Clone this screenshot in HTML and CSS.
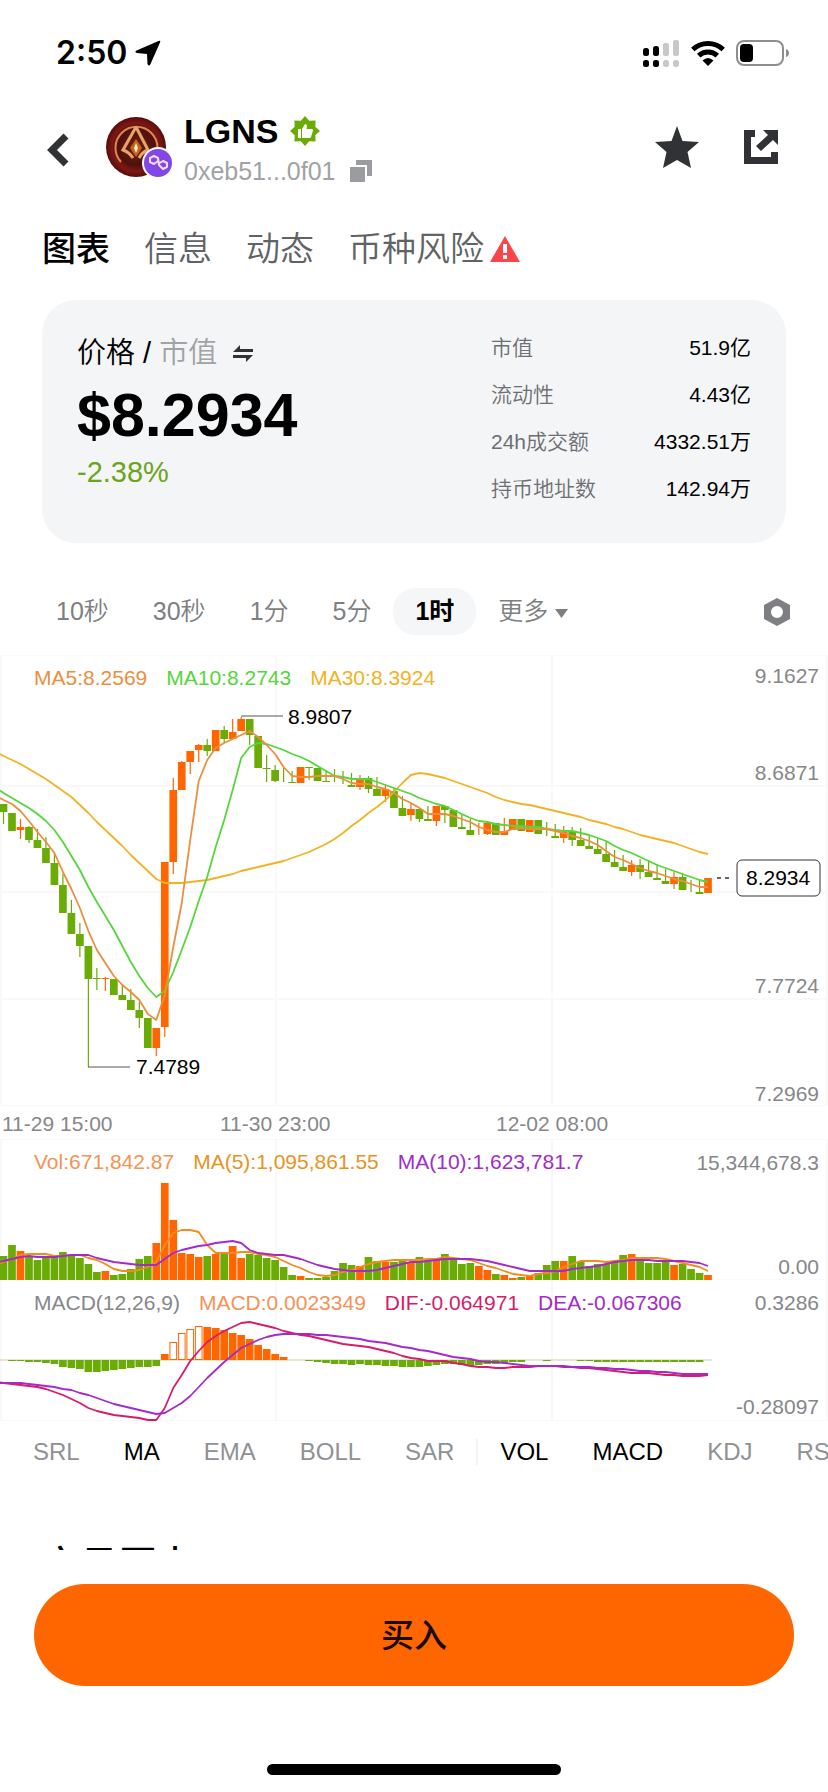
FILE: index.html
```html
<!DOCTYPE html>
<html lang="zh-CN">
<head>
    <meta charset="UTF-8">
    <title>LGNS</title>
    <meta name="viewport" content="width=device-width, initial-scale=1.0">
    <link rel="stylesheet" href="styles.css">
</head>
<body>
<div class="app">
    <main class="content">
        <div class="status-bar">
            <div class="clock">2:50
                <svg width="26" height="26" viewBox="0 0 26 26"><path d="M23.500 1 Q26 0 25 2.500 L15.500 24 Q14 27 12.500 24 L12 14 L2 13 Q-1 12 1.500 10.500 Z"/></svg>
            </div>
            <div class="status-icons">
                <svg width="37" height="28" viewBox="0 0 37 28">
                    <rect x="0" y="9" width="6" height="8" rx="2.500"/><rect x="10" y="7" width="6" height="10" rx="2.500"/>
                    <rect x="0" y="21" width="6" height="7" rx="2.500"/><rect x="10" y="21" width="6" height="7" rx="2.500"/>
                    <g fill="#c8c8c8"><rect x="20" y="4" width="6" height="13" rx="2"/><rect x="30" y="1" width="6" height="16" rx="2"/>
                    <rect x="20" y="21" width="6" height="7" rx="2.500"/><rect x="30" y="21" width="6" height="7" rx="2.500"/></g>
                </svg>
                <svg width="34" height="26" viewBox="0 0 34 26">
                    <g fill="none" stroke="#000" stroke-width="5"><path d="M1.800 9.500 A22 22 0 0 1 32.200 9.500"/><path d="M7.700 15.600 A13.500 13.500 0 0 1 26.300 15.600"/></g>
                    <path d="M11.500 20.500 Q17 15.500 22.500 20.500 L17 26 Z"/>
                </svg>
                <svg width="53" height="26" viewBox="0 0 53 26">
                    <rect x="1" y="1" width="46" height="24" rx="7" fill="none" stroke="#8e8e8e" stroke-width="2"/>
                    <rect x="4" y="4" width="13" height="18" rx="4"/><path d="M50 9 Q53 10 53 13 Q53 16 50 17 Z" fill="#8e8e8e"/>
                </svg>
            </div>
        </div>

        <header class="header">
            <button class="icon-btn" aria-label="返回">
                <svg width="22" height="34" viewBox="0 0 22 34"><path d="M19 3 L5 17 L19 31" fill="none" stroke="#303236" stroke-width="7"/></svg>
            </button>
            <svg class="avatar" width="68" height="66" viewBox="0 0 68 66">
                <defs>
                    <radialGradient id="coin"><stop offset="0" stop-color="#6b2210"/><stop offset="0.6" stop-color="#50100c"/><stop offset="0.8" stop-color="#7d1715"/><stop offset="1" stop-color="#5a0b0c"/></radialGradient>
                </defs>
                <circle cx="30" cy="30" r="30" fill="url(#coin)"/>
                <path d="M15 45 A21 21 0 1 1 46 45" fill="none" stroke="#d98a4e" stroke-width="2"/>
                <path d="M30 10 L42 33 Q36 35 33 41 M30 10 L17 33 Q23 35 27 41" fill="none" stroke="#e8a468" stroke-width="3"/>
                <path d="M30 22 L36 31 L30 40 L24 31 Z" fill="#c4661f"/>
                <path d="M30 26 L32 31 L30 36 L28 31 Z" fill="#fff0b8"/>
                <circle cx="52" cy="46" r="16" fill="#fff"/>
                <circle cx="52" cy="46" r="14" fill="#8247e5"/>
                <path d="M52 44 L48 47 L44 45 V41 L48 39 L52 41 L53 48 L57 52 L61 50 V46 L57 44 L52 47" fill="none" stroke="#f0dcff" stroke-width="2" stroke-linejoin="round"/>
            </svg>
            <div class="token">
                <h1 class="token-name">LGNS
                    <svg width="30" height="30" viewBox="0 0 30 30">
                        <path d="M15 0 L19.200 4.700 L25.600 4.400 L25.300 10.800 L30 15 L25.300 19.200 L25.600 25.600 L19.200 25.300 L15 30 L10.800 25.300 L4.400 25.600 L4.700 19.200 L0 15 L4.700 10.800 L4.400 4.400 L10.800 4.700 Z" fill="#6bab06"/>
                        <path d="M8 13 H11 V22 H8 Z M12 13 L15 8 Q17 8 17 10 L16.500 13 H22 Q23 13 23 14.500 L21 21 Q20.500 22 19.500 22 H12 Z" fill="#fff"/>
                    </svg>
                </h1>
                <div class="token-address">0xeb51...0f01
                    <button class="icon-btn" aria-label="复制">
                        <svg width="24" height="24" viewBox="0 0 24 24" fill="#9a9ca0"><path d="M7 1 H23 V17 H18 V6 H7 Z"/><path d="M1 8 H16 V23 H1 Z"/></svg>
                    </button>
                </div>
            </div>
            <div class="actions">
                <button class="icon-btn" aria-label="收藏">
                    <svg width="44" height="42" viewBox="0 0 44 42"><path d="M22 0 L27.500 15 L44 16 L32.500 26 L36 42 L22 34 L8 42 L11.500 26 L0 16 L16.500 15 Z" fill="#303236"/></svg>
                </button>
                <button class="icon-btn" aria-label="分享">
                    <svg width="34" height="34" viewBox="0 0 34 34" fill="#303236"><path d="M0 0 H11 V7 H7 V27 H27 V22 H34 V34 H0 Z"/><path d="M19 0 H34 V15 L29 10 L17 21 L12 16 L24 5 Z"/></svg>
                </button>
            </div>
        </header>

        <nav class="tabs">
            <a href="#chart" class="active">图表</a>
            <a href="#info">信息</a>
            <a href="#news">动态</a>
            <a href="#risk">币种风险
                <svg width="30" height="26" viewBox="0 0 30 26"><path d="M15 0 L30 26 H0 Z" fill="#fb4548"/><path d="M13 8 H17 V17 H13 Z M13 19 H17 V23 H13 Z" fill="#fff"/></svg>
            </a>
        </nav>

        <section class="card">
            <div class="price-box">
                <div class="price-switch"><span>价格 / <span class="muted">市值</span></span>
                    <button class="icon-btn" aria-label="切换">
                        <svg width="20" height="17" viewBox="0 0 20 17" fill="#303236"><path d="M20 4 V7 H0 L7 0 V4 Z"/><path d="M0 10 V13 H13 V17 L20 10 Z"/></svg>
                    </button>
                </div>
                <div class="price">$8.2934</div>
                <div class="change">-2.38%</div>
            </div>
            <dl class="stats">
                <div><dt>市值</dt><dd>51.9亿</dd></div>
                <div><dt>流动性</dt><dd>4.43亿</dd></div>
                <div><dt>24h成交额</dt><dd>4332.51万</dd></div>
                <div><dt>持币地址数</dt><dd>142.94万</dd></div>
            </dl>
        </section>

        <div class="periods">
            <button>10秒</button>
            <button>30秒</button>
            <button>1分</button>
            <button>5分</button>
            <button class="active">1时</button>
            <button>更多 <svg width="13" height="9" viewBox="0 0 13 9"><path d="M0 0 H13 L6.500 9 Z" fill="#7d7f82"/></svg></button>
            <button class="icon-btn settings" aria-label="设置">
                <svg width="26" height="28" viewBox="0 0 26 28"><path fill-rule="evenodd" d="M13 0 L26 7 V21 L13 28 L0 21 V7 Z M13 8 A6 6 0 1 0 13 20 A6 6 0 1 0 13 8 Z" fill="#7d7f82"/></svg>
            </button>
        </div>

        <section class="chart" id="chart">
            <div class="panel">
                <div class="legend"><span class="ma5">MA5:8.2569</span><span class="ma10">MA10:8.2743</span><span class="ma30">MA30:8.3924</span></div>
                <svg id="price-chart" viewBox="0 0 828 451"></svg>
            </div>
            <svg id="time-axis" viewBox="0 0 828 33"></svg>
            <div class="panel">
                <div class="legend"><span class="vol">Vol:671,842.87</span><span class="vol-ma5">MA(5):1,095,861.55</span><span class="purple">MA(10):1,623,781.7</span></div>
                <svg id="volume-chart" viewBox="0 0 828 141"></svg>
            </div>
            <div class="panel">
                <div class="legend"><span>MACD(12,26,9)</span><span class="vol">MACD:0.0023349</span><span class="dif">DIF:-0.064971</span><span class="purple">DEA:-0.067306</span></div>
                <svg id="macd-chart" viewBox="0 0 828 141"></svg>
            </div>
        </section>

        <div class="indicators">
            <button>SRL</button>
            <button class="active">MA</button>
            <button>EMA</button>
            <button>BOLL</button>
            <button>SAR</button>
            <span class="divider"></span>
            <button class="active">VOL</button>
            <button class="active">MACD</button>
            <button>KDJ</button>
            <button>RSI</button>
        </div>

        <h2 class="section-title">交易历史</h2>
    </main>

    <footer class="bottom-bar">
        <button class="buy">买入</button>
        <div class="home-indicator"></div>
    </footer>
</div>
<script src="chart.js"></script>
</body>
</html>
```
FILE: styles.css
```css
* {
    box-sizing: border-box;
}
body {
    margin: 0;
    background: #fff;
    color: #000;
    font-family: "Liberation Sans", "Noto Sans CJK SC", sans-serif;
}
button {
    padding: 0;
    border: none;
    background: none;
    color: inherit;
    font: inherit;
    white-space: nowrap;
    cursor: pointer;
}
svg {
    flex: none;
}
.app {
    display: flex;
    flex-direction: column;
    height: 100vh;
    overflow: hidden;
}
.content {
    flex: 1;
    min-height: 0;
    overflow-x: hidden;
    overflow-y: auto;
    scrollbar-width: none;
}
.icon-btn {
    display: inline-flex;
    align-items: center;
}

/* status bar */
.status-bar {
    display: flex;
    justify-content: space-between;
    align-items: center;
    padding: 34px 39px 34px 56px;
    line-height: 38px;
}
.clock {
    display: flex;
    align-items: center;
    gap: 8px;
    font-family: Inter, sans-serif;
    font-weight: 600;
    font-size: 32px;
}
.status-icons {
    display: flex;
    align-items: center;
    gap: 11px;
}

/* token header */
.header {
    display: flex;
    align-items: center;
    padding: 4px 50px 0 47px;
}
.avatar {
    margin-left: 37px;
}
.token {
    margin-left: 10px;
}
.token-name {
    display: flex;
    align-items: center;
    gap: 12px;
    margin: 0;
    font-size: 34px;
    line-height: 42px;
}
.token-address {
    display: flex;
    align-items: center;
    gap: 13px;
    color: #a0a2a6;
    font-size: 25px;
    line-height: 38px;
}
.actions {
    display: flex;
    gap: 45px;
    margin-left: auto;
    padding-bottom: 6px;
}
.tabs {
    display: flex;
    gap: 34px;
    margin-top: 35px;
    padding: 0 42px;
    font-size: 34px;
    line-height: 48px;
    font-weight: 350;
}
.tabs a {
    display: flex;
    align-items: center;
    gap: 6px;
    color: #606265;
    text-decoration: none;
}
.tabs .active {
    color: #000;
    font-weight: 500;
}

/* price card */
.card {
    display: flex;
    justify-content: space-between;
    margin: 27px 42px 0;
    padding: 24px 35px 31px;
    border-radius: 34px;
    background: #f4f5f7;
}
.price-box {
    padding-top: 9px;
}
.price-switch {
    display: flex;
    align-items: center;
    gap: 16px;
    font-size: 29px;
    line-height: 40px;
    font-weight: 350;
}
.muted {
    color: #a0a2a6;
}
.price {
    font-size: 61px;
    line-height: 84px;
    font-weight: 700;
}
.change {
    color: #6ca41a;
    font-size: 29px;
    line-height: 30px;
}
.stats {
    width: 260px;
    margin: 0;
    font-size: 21px;
    line-height: 47px;
}
.stats div {
    display: flex;
    justify-content: space-between;
}
.stats dt {
    color: #6c6e72;
    font-weight: 350;
}
.stats dd {
    margin: 0;
}

/* period switch */
.periods {
    display: flex;
    margin-top: 45px;
    padding: 0 38px 0 34px;
    color: #7d7f82;
    font-size: 25px;
    line-height: 47px;
    font-weight: 350;
}
.periods button {
    padding: 0 22px;
    border-radius: 22px;
}
.periods .active {
    background: #f4f6f8;
    color: #000;
    font-weight: 700;
}
.periods .settings {
    margin-left: auto;
    padding: 0;
}
.periods svg {
    vertical-align: middle;
}

/* charts */
.chart {
    margin-top: 20px;
    color: #85878a;
    font-size: 21px;
}
.chart svg {
    display: block;
    width: 100%;
}
.panel {
    position: relative;
}
.legend {
    position: absolute;
    top: 9px;
    left: 34px;
    display: flex;
    gap: 19px;
    line-height: 28px;
    white-space: nowrap;
}
.ma5 { color: #ea8f3e; }
.ma10 { color: #55d63a; }
.ma30 { color: #f0b323; }
.vol { color: #f39355; }
.vol-ma5 { color: #e8931f; }
.purple { color: #a32bc9; }
.dif { color: #d81b6a; }
.axis-label {
    fill: #85878a;
    text-anchor: end;
}
.time-label {
    fill: #85878a;
}
.mark-label {
    fill: #000;
}
.grid {
    stroke: #f9f9f9;
    stroke-width: 2;
}

/* indicator switch */
.indicators {
    display: flex;
    align-items: center;
    gap: 44px;
    padding-left: 33px;
    overflow: hidden;
    color: #8f9194;
    font-size: 24px;
    line-height: 62px;
}
.indicators .active {
    color: #000;
}
.divider {
    flex: none;
    width: 2px;
    height: 26px;
    margin: 0 -22px;
    background: #f3f3f3;
}
.section-title {
    margin: 54px 42px 0;
    font-size: 38px;
    line-height: 56px;
    font-weight: 500;
}

.bottom-bar {
    padding: 34px 34px 17px;
    background: #fff;
}
.buy {
    display: block;
    width: 100%;
    height: 102px;
    padding-bottom: 4px;
    border-radius: 51px;
    background: #ff6600;
    color: #1a0a00;
    font-size: 33px;
    font-weight: 500;
}
.home-indicator {
    width: 294px;
    height: 11px;
    margin: 78px auto 0;
    border-radius: 6px;
    background: #000;
}
```
FILE: chart.js
```js
const GREEN = '#6bab06';
const ORANGE = '#ff6600';
const STEP = 8.488;
const BAR = 7.7;

// indexes of the rising candles
const rising = [2, 12, 18, 19, 20, 21, 22, 23, 25, 27, 28, 35, 42, 45, 48, 51, 56, 57, 59, 60, 62, 66, 74, 79, 83];

// body top, body bottom, wick top, wick bottom
const candles = [
    [149,157,149,169], [158,176,158,176], [172,175,164,184], [172,185,171,188], [185,193,174,193], [193,208,182,208],
    [208,230,197,230], [230,258,219,258], [258,279,245,279], [279,291,268,302], [291,324,291,412], [323,324,313,335],
    [323,324,322,336], [324,340,324,340], [340,345,329,345], [345,355,334,355], [355,363,347,373], [363,393,363,393],
    [373,393,373,401], [207,372,207,382], [135,207,123,219], [107,135,106,135], [96,107,96,119], [90,95,89,107],
    [90,96,84,101], [75,96,75,96], [75,84,71,88], [77,84,64,84], [64,76,62,76], [64,80,64,90],
    [81,113,81,113], [113,114,100,127], [115,126,110,127], [120,120,113,127], [127,128,116,128], [112,128,112,128],
    [112,113,112,125], [113,126,113,126], [126,127,115,127], [127,127,114,127], [120,120,116,129], [130,132,118,132],
    [124,132,120,135], [123,134,121,138], [134,141,122,141], [134,141,129,147], [136,153,133,153], [153,161,141,161],
    [154,160,148,166], [154,164,154,167], [164,166,151,166], [151,166,151,171], [151,155,151,168], [155,172,155,172],
    [172,174,159,174], [175,180,164,180], [179,179,168,180], [168,179,168,180], [168,180,168,180], [176,180,163,180],
    [164,175,164,175], [164,176,164,176], [165,177,165,177], [165,179,165,179], [170,170,167,181], [181,183,169,183],
    [177,183,171,188], [176,185,172,191], [185,191,173,191], [191,194,180,194], [194,199,184,199], [199,207,186,207],
    [207,212,195,212], [212,216,200,216], [210,217,205,221], [210,217,204,224], [217,222,205,222], [223,225,209,225],
    [226,229,214,229], [222,229,217,234], [222,235,218,235], [230,230,225,237], [237,239,226,239], [223,238,223,238]
];

const ma5 = [
    145,149,156,166,177,187,198,217,234,253, 276,295,308,321,330,337,345,359,365,340,
    292,248,185,126,105,93,88,84,80,76, 82,90,99,112,121,122,122,121,121,121,
    124,128,129,129,132,134,138,144,148,153, 159,159,159,161,164,167,172,175,177,177,
    174,173,174,174,174,176,178,181,183,186, 190,196,202,205,209,213,216,218,221,224,
    226,229,232,232
];
const ma10 = [
    138,143,148,153,159,166,175,187,201,215, 232,247,261,275,291,307,321,333,342,336,
    317,295,272,246,222,192,165,135,103,92, 88,89,92,95,99,102,106,111,116,121,
    122,124,124,124,127,130,133,136,139,143, 146,149,151,155,159,163,166,167,169,170,
    171,171,172,172,174,175,176,176,178,180, 183,186,191,195,198,202,206,210,213,216,
    219,222,225,227
];
const ma30 = [
    101,105,109,114,119,124,130,136,142,150, 158,167,175,183,191,200,208,216,224,228,
    228,228,227,226,225,223,221,219,216,214, 212,210,208,206,203,200,197,193,189,184,
    178,171,165,158,152,145,137,128,120,118, 119,121,123,126,129,132,135,138,142,145,
    147,149,150,152,154,156,158,160,162,165, 167,169,172,174,177,180,182,184,186,188,
    191,194,197,199
];

const volume = [
    24,35,29,23,20,23,24,28,24,22, 16,8,9,5,6,11,21,24,37,97,
    60,27,26,23,24,26,28,34,22,26, 25,22,20,13,5,4,2,2,3,9,
    17,15,14,23,19,18,18,20,18,23, 20,21,26,20,16,17,14,10,6,5,
    2,3,4,7,15,19,19,24,18,14, 16,16,19,25,26,19,17,17,18,15,
    16,11,7,5
];
const volMa5 = [
    18,21,25,26,26,26,24,24,25,25, 22,20,16,11,9,9,10,13,18,35,
    47,50,50,48,35,27,27,27,28,28, 26,25,23,19,15,12,8,5,4,5,
    8,10,13,16,18,19,20,20,20,20, 21,21,23,22,21,20,17,14,12,9,
    6,5,4,6,7,9,13,16,19,19, 19,18,19,20,22,22,22,22,21,19,
    17,15,13,9
];
const volMa10 = [
    19,21,23,24,23,23,23,24,25,25, 25,22,20,18,17,16,15,15,15,21,
    27,30,32,34,35,37,38,39,37,30, 27,26,25,25,23,21,18,15,13,11,
    10,9,9,9,10,12,14,16,18,18, 19,20,21,21,21,21,20,19,17,15,
    13,11,9,9,9,9,9,11,12,13, 14,16,18,19,20,20,20,19,19,19,
    19,18,17,14
];

const macd = [
    0,-1,-1,-2,-2,-3,-4,-7,-8,-9, -12,-12,-11,-10,-9,-8,-7,-7,-6,6,
    18,27,31,34,33,32,30,27,25,21, 15,11,6,3,0,0,-1,-2,-3,-4,
    -4,-5,-4,-5,-5,-6,-6,-7,-7,-7, -6,-5,-4,-4,-5,-6,-5,-4,-4,-3,
    -2,-2,0,0,-1,0,0,0,-1,-1, -2,-2,-2,-2,-2,-2,-2,-2,-2,-2,
    -2,-2,-2,0
];
const dif = [
    103,104,105,106,107,109,112,115,119,123, 128,131,133,135,136,137,138,140,140,128,
    108,95,81,71,62,56,51,47,43,42, 44,46,48,51,53,55,56,58,60,62,
    64,65,66,67,69,71,73,76,78,79, 81,81,81,83,84,86,87,87,88,88,
    87,87,87,86,86,86,87,87,88,88, 89,90,91,92,93,93,93,94,95,95,
    96,96,96,95
];
const dea = [
    103,103,103,104,105,106,107,109,110,113, 115,118,121,124,126,128,130,132,134,133,
    128,123,116,107,98,90,82,75,68,64, 60,57,55,54,54,54,54,55,55,56,
    57,58,59,61,62,63,65,67,68,70, 71,73,75,77,78,79,81,82,82,83,
    84,85,86,86,86,86,86,87,87,87, 88,88,89,89,90,91,91,92,92,93,
    94,94,94,94
];

function center(i) {
    return 3.5 + i * STEP;
}

function color(i) {
    return rising.includes(i) ? ORANGE : GREEN;
}

function rect(i, y, height, fill) {
    return `<rect x="${center(i) - BAR / 2}" y="${y}" width="${BAR}" height="${height}" fill="${fill}"/>`;
}

function hollow(i, y, height) {
    return `<rect x="${center(i) - BAR / 2 + 0.5}" y="${y + 0.5}" width="${BAR - 1}" height="${height - 1}" fill="#fff" stroke="${ORANGE}"/>`;
}

function segment(x1, y1, x2, y2, stroke, width) {
    return `<path d="M${x1} ${y1} L${x2} ${y2}" stroke="${stroke}" stroke-width="${width}"/>`;
}

function line(values, stroke) {
    const start = values[0] - (values[1] - values[0]) / 2;
    const points = values.map((v, i) => `${center(i)},${v}`).join(' ');
    return `<polyline points="0,${start} ${points}" fill="none" stroke="${stroke}" stroke-width="1.8" stroke-linejoin="round"/>`;
}

function grid(height, rows) {
    let out = '';
    [1, 276, 552, 827].forEach(x => out += `<path class="grid" d="M${x} 0 V${height}"/>`);
    rows.forEach(y => out += `<path class="grid" d="M0 ${y} H828"/>`);
    return out;
}

function label(x, y, text, name = 'axis-label') {
    return `<text class="${name}" x="${x}" y="${y}">${text}</text>`;
}

function drawPrice() {
    let out = grid(451, [0, 131, 237, 344, 451]);
    candles.forEach(([top, bottom, high, low], i) => {
        out += segment(center(i), high, center(i), low, color(i), 1.2);
        if (bottom > top) out += rect(i, top, bottom - top, color(i));
    });
    out += line(ma30, '#f0b323') + line(ma10, '#55d63a') + line(ma5, '#ea8f3e');
    out += segment(241, 61, 283, 61, '#555', 1) + label(288, 69, '8.9807', 'mark-label');
    out += segment(88, 412, 130, 412, '#555', 1) + label(136, 419, '7.4789', 'mark-label');
    out += label(819, 28, '9.1627') + label(819, 125, '8.6871') + label(819, 338, '7.7724') + label(819, 446, '7.2969');
    out += '<path d="M717 223 H730" stroke="#333" stroke-width="1.5" stroke-dasharray="4 4"/>';
    out += '<rect x="737" y="205" width="83" height="36" rx="5" fill="#fff" stroke="#333"/>';
    out += label(746, 230, '8.2934', 'mark-label');
    document.getElementById('price-chart').innerHTML = out;
}

function drawTime() {
    document.getElementById('time-axis').innerHTML =
        label(2, 25, '11-29 15:00', 'time-label') + label(220, 25, '11-30 23:00', 'time-label') + label(496, 25, '12-02 08:00', 'time-label');
}

function drawVolume() {
    let out = grid(141, [0, 141]);
    volume.forEach((v, i) => out += rect(i, 141 - v, v, color(i)));
    out += line(volMa5.map(v => 141 - v), '#f28c1e') + line(volMa10.map(v => 141 - v), '#a32bc9');
    out += label(819, 31, '15,344,678.3') + label(819, 135, '0.00');
    document.getElementById('volume-chart').innerHTML = out;
}

function drawMacd() {
    let out = grid(141, [141]);
    out += segment(0, 80, 712, 80, '#d9c9a8', 1);
    macd.forEach((v, i) => {
        if (v > 0 && i > 19 && i < 24) out += hollow(i, 80 - v, v);
        else if (v > 0) out += rect(i, 80 - v, v, ORANGE);
        else if (v < 0) out += rect(i, 80, -v, GREEN);
    });
    out += line(dif, '#d81b6a') + line(dea, '#a32bc9');
    out += label(819, 30, '0.3286') + label(819, 134, '-0.28097');
    document.getElementById('macd-chart').innerHTML = out;
}

drawPrice();
drawTime();
drawVolume();
drawMacd();
```
